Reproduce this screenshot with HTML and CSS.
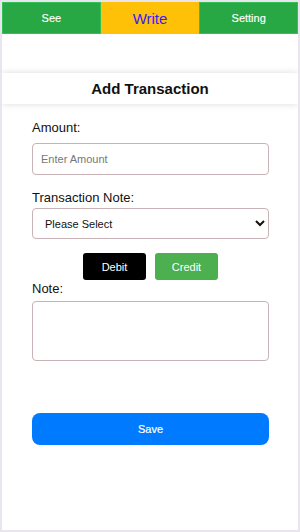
FILE: index.html
```html
<!DOCTYPE html>
<html lang="en">
<head>
    <meta charset="UTF-8">
    <meta name="viewport" content="width=device-width, initial-scale=1.0">
    <title>Expense Book - Write</title>
    <link rel="stylesheet" href="styles.css">
</head>
<body>

    <div class="app-container">
        <!-- Top Tabs -->
        <div class="tab-bar">
            <a href="#" class="tab">See</a>
            <a href="#" class="tab active">Write</a>
            <a href="#" class="tab">Setting</a>
        </div>

        <!-- Title -->
        <div class="page-header">Add Transaction</div>

        <!-- Form -->
        <form class="txn-form" onsubmit="return false">
            <label class="field-label" for="amount">Amount:</label>
            <input type="text" id="amount" class="field" placeholder="Enter Amount">

            <label class="field-label" for="note-type">Transaction Note:</label>
            <select id="note-type" class="field select-field">
                <option>Please Select</option>
                <option>Food</option>
                <option>Travel</option>
                <option>Salary</option>
            </select>

            <div class="type-buttons">
                <button type="button" class="type-btn debit">Debit</button>
                <button type="button" class="type-btn credit">Credit</button>
            </div>

            <label class="field-label note-label" for="note">Note:</label>
            <textarea id="note" class="field note-field"></textarea>

            <button type="submit" class="save-btn">Save</button>
        </form>
    </div>

</body>
</html>
```

FILE: styles.css
```css
/* General Styles */
body {
    font-family: "Liberation Sans", Arial, sans-serif;
    background-color: #e9e5ee;
    margin: 0;
}

.app-container {
    margin: 2px;
    height: 528px;
    background: #ffffff;
    overflow: hidden;
}

/* Tabs */
.tab-bar {
    display: flex;
    height: 32px;
}

.tab {
    flex: 1;
    display: flex;
    justify-content: center;
    align-items: center;
    background: #28a745;
    border: 1px solid #33c155;
    color: #ffffff;
    font-size: 11px;
    text-decoration: none;
    -webkit-text-stroke: 0.15px #ffffff;
}

.tab.active {
    background: #ffc107;
    border-color: #ffc107;
    color: #3a1aff;
    font-size: 15px;
    -webkit-text-stroke: 0;
}

/* Title */
.page-header {
    margin-top: 39px;
    height: 31px;
    line-height: 31px;
    text-align: center;
    font-size: 15px;
    font-weight: bold;
    color: #111;
    box-shadow: 0 0 7px rgba(0, 0, 0, 0.14);
}

/* Form */
.txn-form {
    display: flex;
    flex-direction: column;
    padding: 16px 29px 0 30px;
}

.field-label {
    font-size: 13px;
    line-height: 15px;
    color: #111;
}

.field {
    box-sizing: border-box;
    width: 100%;
    margin-top: 8px;
    border: 1px solid #c9b3b6;
    border-radius: 4px;
    background: #fff;
    font-family: inherit;
    outline: none;
}

#amount {
    height: 32px;
    padding: 0 8px;
    font-size: 11px;
    margin-bottom: 15px;
}

#amount::placeholder {
    color: #777;
}

.select-field {
    height: 31px;
    padding: 0 8px;
    font-size: 11px;
    color: #111;
    margin-top: 3px;
}

.type-buttons {
    display: flex;
    justify-content: center;
    gap: 9px;
    margin-top: 14px;
}

.type-btn {
    width: 63px;
    height: 27px;
    border: none;
    border-radius: 3px;
    color: #fff;
    font-family: inherit;
    font-size: 11px;
}

.debit {
    background: #000;
}

.credit {
    background: #4caf50;
}

.note-label {
    margin-top: 1px;
}

.note-field {
    height: 60px;
    margin-top: 5px;
    resize: none;
}

.save-btn {
    margin-top: 52px;
    height: 32px;
    width: 100%;
    border: none;
    border-radius: 8px;
    background: #007bff;
    color: #fff;
    font-family: inherit;
    font-size: 11px;
    font-weight: 500;
    -webkit-text-stroke: 0.2px #fff;
}
```
